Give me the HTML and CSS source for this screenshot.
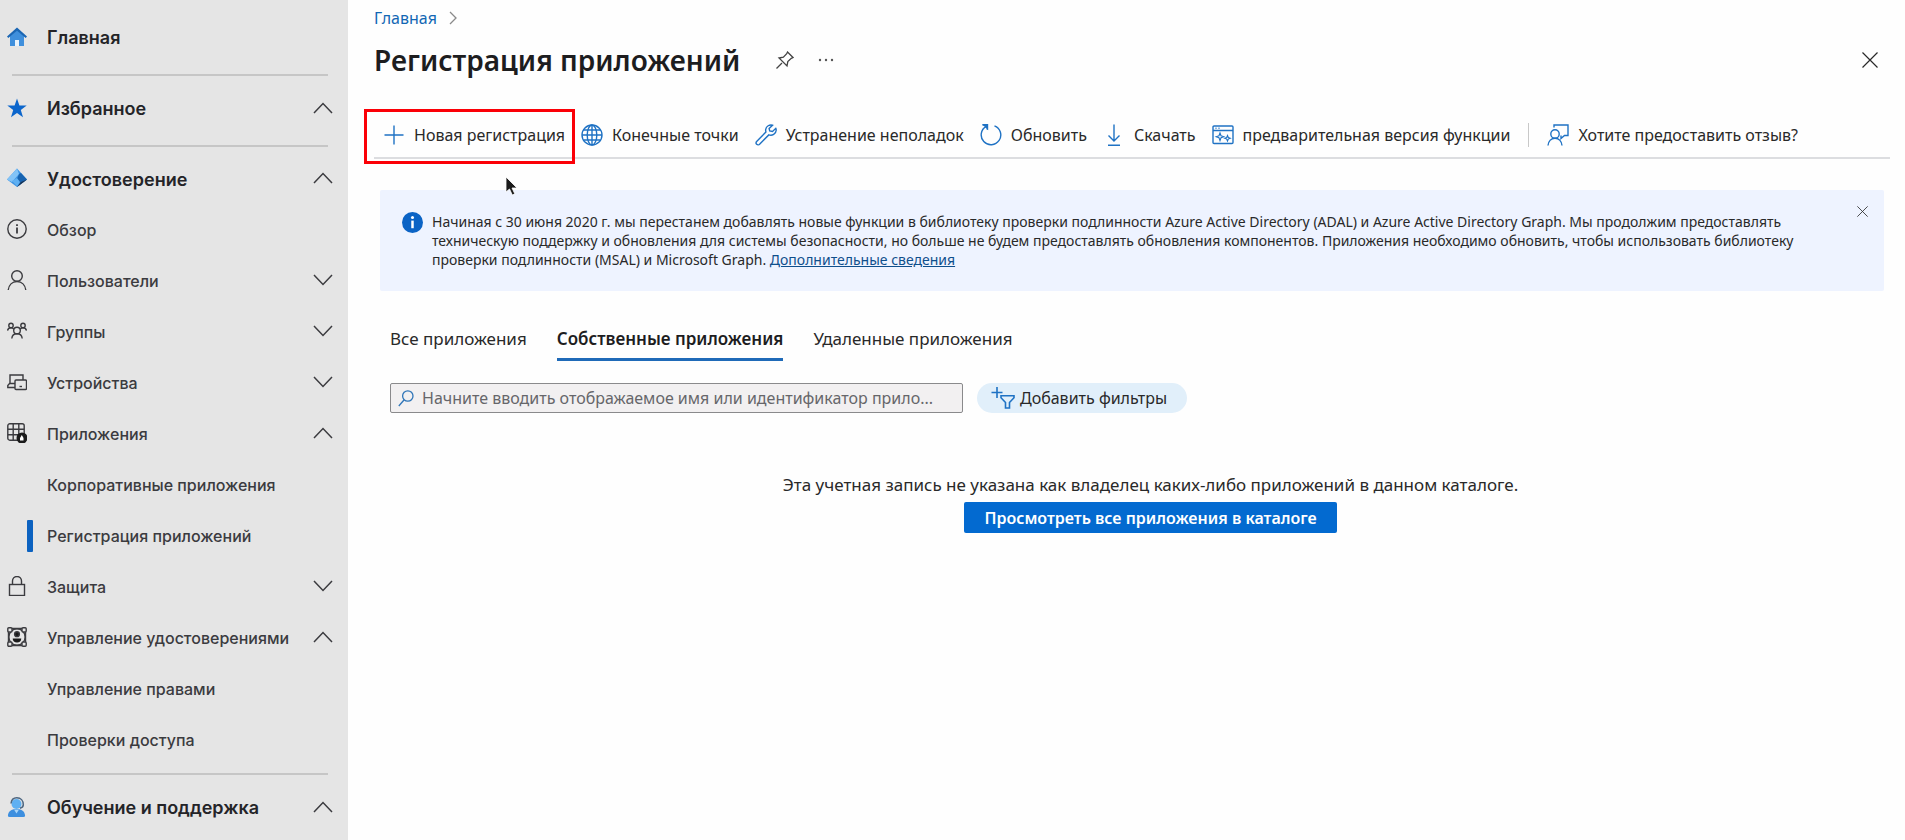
FILE: index.html
```html
<!DOCTYPE html>
<html lang="ru">
<head>
    <meta charset="utf-8">
    <title>Регистрация приложений</title>
    <link rel="stylesheet" href="styles.css">
</head>
<body>
    <svg class="sprite" aria-hidden="true">
        <symbol id="up" viewBox="0 0 20 12"><path d="M1 11 10 1.500l9 9.500" fill="none" stroke="currentColor" stroke-width="1.500"/></symbol>
        <symbol id="down" viewBox="0 0 20 12"><path d="M1 1l9 9.500L19 1" fill="none" stroke="currentColor" stroke-width="1.500"/></symbol>
        <symbol id="cross" viewBox="0 0 16 16"><path d="M.5.500l15 15M15.500.500l-15 15" fill="none" stroke="currentColor" stroke-width="1.200"/></symbol>
    </svg>

    <nav class="sidebar">
        <ul class="group">
            <li><a class="row head" href="#">
                <svg class="icon" viewBox="0 0 20 20"><path d="M3 9v10h5v-6h4v6h5V9l-7-6z" fill="#3f8fdc"/><path d="M8 13h4v6H8z" fill="#e9f3fc"/><path d="M10 .500 0 9.500l1.300 1.500L10 3.700l8.700 7.300L20 9.500z" fill="#1a66b4"/></svg>
                <span>Главная</span>
            </a></li>
        </ul>
        <ul class="group">
            <li><button class="row head">
                <svg class="icon" viewBox="0 0 20 20"><path d="M10 .500l2.400 6.900 7.300.100-5.900 4.400 2.200 7.300-6-4.300-6 4.300 2.200-7.300L.300 7.500l7.300-.100z" fill="#0c66cc"/></svg>
                <span>Избранное</span>
                <svg class="chevron"><use href="#up"/></svg>
            </button></li>
        </ul>
        <ul class="group identity">
            <li><button class="row head">
                <svg class="icon" viewBox="0 0 20 20"><path d="M10 .500 0 11.500l10 7.500 10-7.500z" fill="#3d94e4"/><path d="M10 .500 0 11.500l5 2.500L12 6z" fill="#82c3f7"/><path d="M12 6l-2 5 3 4-3 4L20 11.500 14 5z" fill="#1763b0"/><path d="M10 19l4-5 6-2.500z" fill="#1b3350"/><path d="M5 13l5-3 3 4-3 4z" fill="#5fb0f2"/></svg>
                <span>Удостоверение</span>
                <svg class="chevron"><use href="#up"/></svg>
            </button></li>
            <li><a class="row" href="#">
                <svg class="icon line" viewBox="0 0 20 20"><circle cx="10" cy="10" r="9.200"/><path d="M10 8.500v6M10 5.300v1.700" stroke-width="1.800"/></svg>
                <span>Обзор</span>
            </a></li>
            <li><button class="row">
                <svg class="icon line" viewBox="0 0 20 20"><circle cx="10" cy="6" r="5.300"/><path d="M1.200 20c.6-5 4-8.500 8.800-8.500s8.200 3.500 8.800 8.500"/></svg>
                <span>Пользователи</span>
                <svg class="chevron"><use href="#down"/></svg>
            </button></li>
            <li><button class="row">
                <svg class="icon line" viewBox="0 0 20 20"><circle cx="4" cy="4.500" r="2.200"/><circle cx="16" cy="4.500" r="2.200"/><circle cx="10" cy="9.500" r="3.300"/><path d="M.5 9.500C1 7.500 2.500 6.700 4 6.700s2 .5 3 1.500M19.500 9.500c-.5-2-2-2.800-3.500-2.800s-2 .5-3 1.500M4.800 17.500c.3-3 2.200-4.700 5.200-4.700s4.900 1.700 5.200 4.700"/></svg>
                <span>Группы</span>
                <svg class="chevron"><use href="#down"/></svg>
            </button></li>
            <li><button class="row">
                <svg class="icon line" viewBox="0 0 20 20"><path d="M8 15.500H.8v-2L3 11V3h13v5M3 11.500h5"/><rect x="8" y="8" width="11.500" height="9.500" rx="1"/><path d="M12.500 14.500h2.500"/></svg>
                <span>Устройства</span>
                <svg class="chevron"><use href="#down"/></svg>
            </button></li>
            <li><button class="row">
                <svg class="icon line" viewBox="0 0 20 20"><rect x=".8" y=".8" width="16.400" height="16.400" rx="2"/><path d="M6.200.800v16.400M11.800.800v16.400M.8 6.200h16.400M.8 11.800h16.400"/><circle cx="15" cy="15" r="4.800" fill="#1b1b1b" stroke="#1b1b1b"/><path d="M14.800 12l1.700 3v2.500h-3.500v-2.500z" fill="#fff" stroke="none"/></svg>
                <span>Приложения</span>
                <svg class="chevron"><use href="#up"/></svg>
            </button></li>
            <li><a class="row sub" href="#"><span>Корпоративные приложения</span></a></li>
            <li><a class="row sub current" href="#"><span>Регистрация приложений</span></a></li>
            <li><button class="row">
                <svg class="icon line" viewBox="0 0 20 20"><rect x="2.500" y="8.500" width="15" height="11"/><path d="M5.500 8.500V5a4.500 4.500 0 0 1 9 0v3.500"/></svg>
                <span>Защита</span>
                <svg class="chevron"><use href="#down"/></svg>
            </button></li>
            <li><button class="row">
                <svg class="icon line" viewBox="0 0 20 20"><circle cx="10" cy="10" r="8.200"/><g fill="#e5e5e5"><rect x=".8" y=".8" width="4.200" height="4.200" rx="1"/><rect x="15" y=".8" width="4.200" height="4.200" rx="1"/><rect x=".8" y="15" width="4.200" height="4.200" rx="1"/><rect x="15" y="15" width="4.200" height="4.200" rx="1"/></g><path d="M5 1.500h10M5 18.500h10M1.500 5v10M18.500 5v10"/><circle cx="10" cy="7.200" r="2.400" fill="#1b1b1b"/><path d="M5.700 11.500h8.600c0 2.500-1.800 4-4.300 4s-4.300-1.500-4.300-4z" fill="#1b1b1b" stroke="none"/></svg>
                <span>Управление удостоверениями</span>
                <svg class="chevron"><use href="#up"/></svg>
            </button></li>
            <li><a class="row sub" href="#"><span>Управление правами</span></a></li>
            <li><a class="row sub" href="#"><span>Проверки доступа</span></a></li>
        </ul>
        <ul class="group last">
            <li><button class="row head">
                <svg class="icon" viewBox="0 0 20 20"><path d="M2.500 20c-1.500 0-1.700-1-1.500-2 .6-3.500 3-6 8.500-6s8 2.500 8.500 6c.2 1 0 2-1.500 2z" fill="#3d8fdf"/><circle cx="9.500" cy="7" r="5" fill="#5fb0f2"/><path d="M4 6.500C4.500 2.500 6.500.800 9.800.800c4 0 6.500 3 6.500 7 0 2-1.300 3-3.300 3.500" fill="none" stroke="#4d6680" stroke-width="1.500"/><path d="M7 12.500l2.500 4 2.500-4z" fill="#a9d6fa"/></svg>
                <span>Обучение и поддержка</span>
                <svg class="chevron"><use href="#up"/></svg>
            </button></li>
        </ul>
    </nav>

    <main>
        <div class="breadcrumb">
            <a href="#">Главная</a>
            <svg width="8" height="14" viewBox="0 0 8 14"><path d="M1 1l6 6-6 6" fill="none" stroke="#8a8a8a" stroke-width="1.300"/></svg>
        </div>

        <header class="titlebar">
            <h1>Регистрация приложений</h1>
            <button class="plain" aria-label="Закрепить">
                <svg width="18" height="18" viewBox="0 0 18 18"><path d="M.5 17.500 6 12M11.500 1l5.500 5.500-1.700.800-3.500 3.300-.8 4.400L3 7l4.400-.8 3.300-3.500z" fill="none" stroke="#444" stroke-width="1.300"/></svg>
            </button>
            <button class="plain" aria-label="Ещё">
                <svg width="16" height="4" viewBox="0 0 16 4" fill="#555"><circle cx="2" cy="2" r="1.200"/><circle cx="8" cy="2" r="1.200"/><circle cx="14" cy="2" r="1.200"/></svg>
            </button>
            <button class="plain close" aria-label="Закрыть"><svg width="16" height="16"><use href="#cross"/></svg></button>
        </header>

        <div class="toolbar">
            <button class="tool new">
                <svg class="tool-icon" viewBox="0 0 22 22"><path d="M11 1.500v19M1.500 11h19"/></svg>
                Новая регистрация
            </button>
            <button class="tool">
                <svg class="tool-icon" viewBox="0 0 22 22"><circle cx="11" cy="11" r="10"/><ellipse cx="11" cy="11" rx="4.800" ry="10"/><path d="M11 1v20M1 11h20M2.500 6h17M2.500 16h17"/></svg>
                Конечные точки
            </button>
            <button class="tool">
                <svg class="tool-icon" viewBox="0 0 22 22"><path d="M17.500 1.200c-3-.9-6.300 1-6.800 4.100-.2 1 0 1.900.2 2.700l-9 9.200c-1 1-1 2.300-.2 3.100s2.200.800 3.100-.2l9-9.200c3.300 1.200 7.200-.8 7.400-4.600 0-.8-.1-1.400-.4-2L17.500 7.500l-2.800-.6-.6-2.500z"/></svg>
                Устранение неполадок
            </button>
            <button class="tool">
                <svg class="tool-icon" viewBox="0 0 22 22"><path d="M14.500 1.800a9.800 9.800 0 1 1-8.300.6M2.500 1h4.800v4.800"/><path d="M3.500.500h4v4z" fill="#1f72c4"/></svg>
                Обновить
            </button>
            <button class="tool">
                <svg class="tool-icon" viewBox="0 0 22 22"><path d="M11 .500v16.500M5.500 11.500l5.500 5.500 5.500-5.500M5 21.200h12"/></svg>
                Скачать
            </button>
            <button class="tool">
                <svg class="tool-icon" viewBox="0 0 22 22"><rect x="1" y="2" width="20" height="17.500" rx="1"/><path d="M1 6.500h20M3.500 4.300h1M6.500 4.300h1"/><path d="M8 9l1 2.800 2.800 1-2.800 1-1 2.800-1-2.800-2.800-1 2.800-1zM15.500 11.500l.8 2 2 .8-2 .8-.8 2-.8-2-2-.8 2-.8z" stroke-width="1.100"/></svg>
                предварительная версия функции
            </button>
            <span class="divider"></span>
            <button class="tool">
                <svg class="tool-icon" viewBox="0 0 22 22"><circle cx="8" cy="10" r="4.200"/><path d="M1 21.500c.4-4.500 3.300-7.300 7-7.300s6.600 2.800 7 7.300M7 3.500V1h14v10.500h-3.500L14 14.500v-3"/></svg>
                Хотите предоставить отзыв?
            </button>
        </div>

        <section class="banner">
            <svg class="info" viewBox="0 0 22 22"><circle cx="11" cy="11" r="11" fill="#0b63c5"/><path d="M11 9v8" stroke="#fff" stroke-width="2.600"/><circle cx="11" cy="5.700" r="1.600" fill="#fff"/></svg>
            <p>Начиная с 30 июня 2020 г. мы перестанем добавлять новые функции в библиотеку проверки подлинности Azure Active Directory (ADAL) и Azure Active Directory Graph. Мы продолжим предоставлять<br>
            техническую поддержку и обновления для системы безопасности, но больше не будем предоставлять обновления компонентов. Приложения необходимо обновить, чтобы использовать библиотеку<br>
            проверки подлинности (MSAL) и Microsoft Graph. <a href="#">Дополнительные сведения</a></p>
            <button class="plain dismiss" aria-label="Скрыть"><svg width="11" height="11"><use href="#cross"/></svg></button>
        </section>

        <div class="tabs" role="tablist">
            <button class="tab" role="tab">Все приложения</button>
            <button class="tab active" role="tab" aria-selected="true">Собственные приложения</button>
            <button class="tab" role="tab">Удаленные приложения</button>
        </div>

        <div class="filters">
            <label class="search">
                <svg width="16" height="17" viewBox="0 0 16 17"><circle cx="9.800" cy="6" r="5.200" fill="none" stroke="#2f75b8" stroke-width="1.300"/><path d="M6.200 9.800.800 16" stroke="#2f75b8" stroke-width="1.300"/></svg>
                <input type="text" aria-label="Поиск приложений" placeholder="Начните вводить отображаемое имя или идентификатор прило...">
            </label>
            <button class="pill">
                <svg width="24" height="22" viewBox="0 0 24 22" fill="none" stroke="#1f72c4" stroke-width="1.600"><path d="M6 0v11M.5 5.500h11M10 8.800h13v2l-4.500 4.700v5.500h-4v-5.500L10 10.800z"/></svg>
                Добавить фильтры
            </button>
        </div>

        <div class="empty">
            <p>Эта учетная запись не указана как владелец каких-либо приложений в данном каталоге.</p>
            <button class="primary">Просмотреть все приложения в каталоге</button>
        </div>
    </main>

    <svg class="cursor" viewBox="0 0 13 20"><path d="M1 1v15l3.500-3 2.800 6 2.500-1.200L7 12h5z" fill="#1b1b1b" stroke="#fff" stroke-width=".8"/></svg>
</body>
</html>
```

FILE: styles.css
```css
* {
    box-sizing: border-box;
}

body {
    margin: 0;
    min-height: 100vh;
    display: flex;
    background-color: #fefefe;
    color: #292929;
    font-family: "Noto Sans", "Open Sans", sans-serif;
    font-size: 16px;
}

button {
    border: none;
    background: none;
    padding: 0;
    color: inherit;
    font: inherit;
    cursor: pointer;
}

ul, p, h1 {
    margin: 0;
    padding: 0;
}

a {
    color: #1267b4;
    text-decoration: none;
}

svg {
    flex: none;
    display: block;
}

.sprite {
    position: absolute;
    width: 0;
    height: 0;
}

/* sidebar */
.sidebar {
    flex: none;
    width: 348px;
    padding-top: 5px;
    background-color: #e5e5e5;
    font-family: Inter, sans-serif;
    font-weight: 500;
}

.group {
    list-style: none;
    padding: 7px 0 12px;
}

.group + .group::before {
    content: "";
    display: block;
    height: 2px;
    margin: -8px 20px 7px 12px;
    background-color: #c6c6c6;
}

.group.identity {
    padding-bottom: 9px;
}

.group.last {
    padding-bottom: 0;
}

.row {
    display: flex;
    align-items: center;
    gap: 20px;
    width: 100%;
    height: 51px;
    padding: 0 15px 0 7px;
    color: #3b3b3f;
    text-align: left;
}

.row span {
    flex: 1;
    white-space: nowrap;
}

.head {
    color: #242428;
    font-size: 18px;
    font-weight: 600;
}

.identity .head {
    height: 50px;
}

.icon {
    width: 20px;
    height: 20px;
    margin-bottom: 2px;
}

.line {
    fill: none;
    stroke: #3b3b3f;
    stroke-width: 1.4;
}

.chevron {
    width: 20px;
    height: 12px;
    margin-bottom: 2px;
    color: #3b3b3f;
}

.sub {
    padding-left: 47px;
}

.current {
    padding-left: 27px;
    gap: 14px;
}

.current::before {
    content: "";
    width: 6px;
    height: 32px;
    border-radius: 1px;
    background-color: #0c62c0;
}

/* main pane */
main {
    flex: 1;
    min-width: 0;
    padding: 6px 15px 0 26px;
}

.breadcrumb {
    display: flex;
    align-items: center;
    gap: 12px;
    height: 24px;
}

.titlebar {
    display: flex;
    align-items: center;
    height: 60px;
    gap: 24px;
}

h1 {
    margin-right: 12px;
    color: #1d1d1f;
    font-size: 28px;
    font-weight: 600;
}

.close {
    margin: 0 12px 0 auto;
}

.toolbar {
    display: flex;
    align-items: center;
    gap: 16px;
    height: 69px;
    padding: 22px 0 0 9px;
    border-bottom: 2px solid #dcdde0;
}

.tool {
    position: relative;
    display: flex;
    align-items: center;
    gap: 9px;
    white-space: nowrap;
}

.tool-icon {
    width: 22px;
    height: 22px;
    fill: none;
    stroke: #1f72c4;
    stroke-width: 1.4;
}

.new::after {
    content: "";
    position: absolute;
    inset: -15px -10px -18px -19px;
    border: 3px solid #fb0007;
}

.divider {
    width: 1px;
    height: 24px;
    margin: 0 2px;
    background-color: #c8c8c8;
}

.banner {
    display: flex;
    align-items: flex-start;
    margin: 31px 6px 0;
    padding: 22px 16px 20px 22px;
    height: 101px;
    border-radius: 2px;
    background-color: #eef3ff;
}

.banner p {
    flex: 1;
    font-size: 14px;
    line-height: 19px;
    white-space: nowrap;
}

.banner a {
    color: #0f4f8c;
    text-decoration: underline;
}

.info {
    width: 21px;
    height: 21px;
    margin-right: 9px;
}

.dismiss {
    margin: -6px 0 0;
}

.tabs {
    display: flex;
    gap: 30px;
    margin: 34px 0 0 16px;
    font-size: 17px;
}

.tab {
    height: 36px;
    padding-bottom: 6px;
    border-bottom: 3px solid transparent;
}

.active {
    border-bottom-color: #1f6ab8;
    color: #1d1d1f;
    font-weight: 600;
}

.filters {
    display: flex;
    align-items: center;
    gap: 14px;
    margin: 22px 0 0 16px;
}

.search {
    display: flex;
    align-items: center;
    flex: 0 1 573px;
    gap: 8px;
    height: 30px;
    padding: 0 7px;
    border: 1px solid #8a8a8c;
    border-radius: 2px;
    background-color: #f2f0f1;
}

.search input {
    flex: 1;
    min-width: 0;
    padding: 0;
    border: none;
    outline: none;
    background: none;
    font: inherit;
}

.search input::placeholder {
    color: #66666a;
    opacity: 1;
}

.pill {
    display: flex;
    align-items: center;
    gap: 5px;
    height: 30px;
    padding: 0 20px 0 14px;
    border-radius: 15px;
    background-color: #e1effa;
}

.empty {
    display: flex;
    flex-direction: column;
    align-items: center;
    gap: 6px;
    margin: 60px -15px 0 22px;
    font-size: 17px;
}

.primary {
    height: 31px;
    padding: 0 20px;
    border-radius: 2px;
    background-color: #036ad0;
    color: #fff;
    font-size: 16px;
    font-weight: 600;
}

/* pointer floating over the page */
.cursor {
    position: absolute;
    left: 505px;
    top: 176px;
    width: 13px;
    height: 20px;
}
```
